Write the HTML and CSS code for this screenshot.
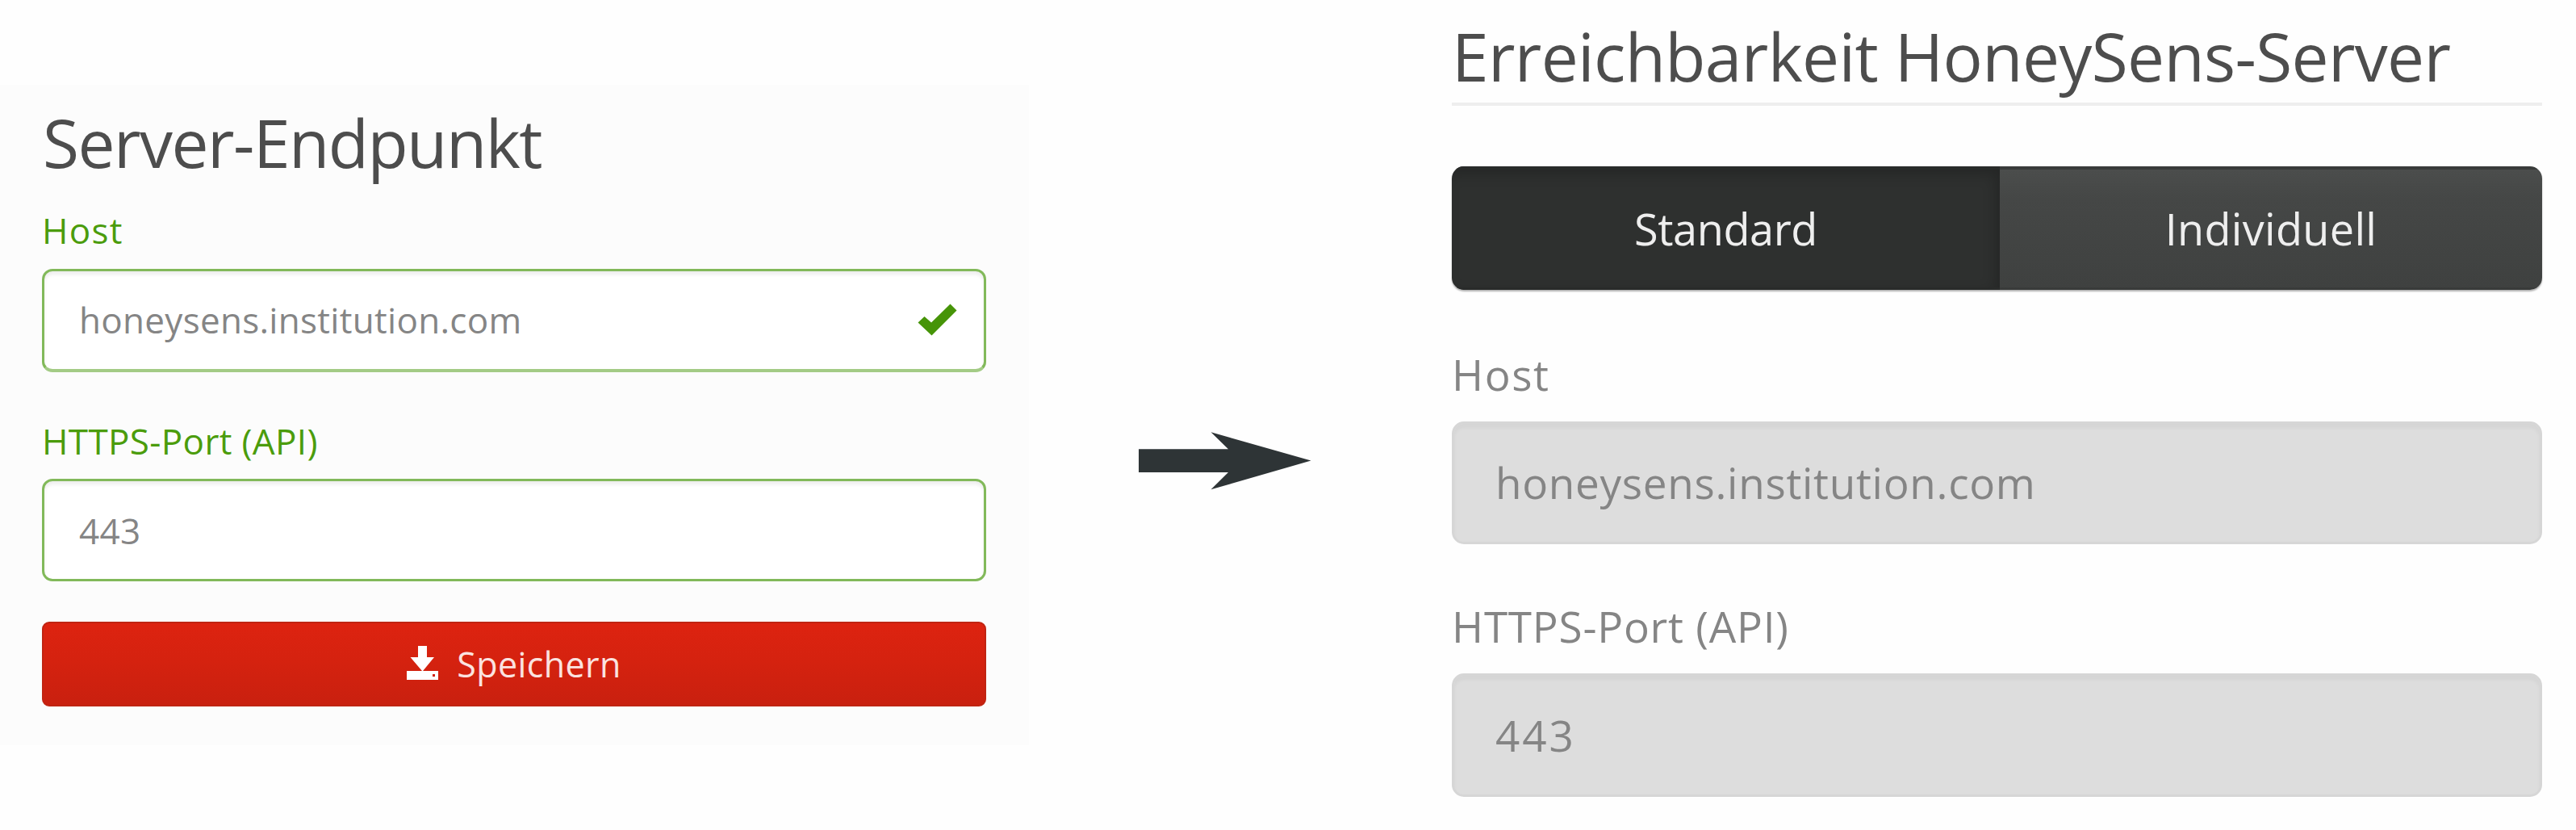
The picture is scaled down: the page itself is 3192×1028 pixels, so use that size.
FILE: index.html
```html
<!DOCTYPE html>
<html lang="de">
<head>
<meta charset="utf-8">
<title>HoneySens</title>
<link rel="stylesheet" href="styles.css">
</head>
<body>
<main class="page">
  <section class="endpoint">
    <h1 class="title endpoint-title">Server-Endpunkt</h1>
    <div class="label label-host">Host</div>
    <div class="input input-host"><span>honeysens.institution.com</span>
      <svg class="check" viewBox="0 0 49 40"><path d="M0.5 23.5 8.5 16 17 23.5 40.5 0.5 48.5 8.5 17.5 39.5Z"/></svg>
    </div>
    <div class="label label-port">HTTPS-Port (API)</div>
    <div class="input input-port"><span>443</span></div>
    <div class="save">
      <svg class="save-icon" viewBox="0 0 39 42"><path fill-rule="evenodd" d="M14 0H25V14H34L20 31H39V42H0V31H19L4.500 14H14ZM32 35V38H35V35Z"/></svg>
      <span>Speichern</span>
    </div>
  </section>
  <svg class="arrow" viewBox="0 0 214 72"><path d="M0 21.300H111L89.500 0.300 213.500 35.500 89.500 71.300 111 50H0Z"/></svg>
  <section class="reach">
    <h1 class="title reach-title">Erreichbarkeit HoneySens-Server</h1>
    <div class="group">
      <div class="option active"><span>Standard</span></div>
      <div class="option"><span class="wide">Individuell</span></div>
    </div>
    <div class="r-label r-host">Host</div>
    <div class="disabled d-host">honeysens.institution.com</div>
    <div class="r-label r-port">HTTPS-Port (API)</div>
    <div class="disabled d-port">443</div>
  </section>
</main>
</body>
</html>
```
FILE: styles.css
```css
* { box-sizing: border-box; }
body {
  margin: 0;
  background: #fefefe;
  font-family: "Open Sans", "Noto Sans", sans-serif;
}
.page { display: flex; align-items: flex-start; width: 3192px; height: 1028px; overflow: hidden; }
.title { margin: 0; font-size: 82px; font-weight: 400; color: #4d4d4d; white-space: nowrap; }

.endpoint {
  flex: none;
  width: 1275px;
  height: 818px;
  margin-top: 105px;
  padding: 26px 53px 0 52px;
  background: #fcfcfc;
}
.endpoint-title { padding-left: 1px; line-height: 90px; letter-spacing: -1.5px; }
.label { font-size: 44px; line-height: 60px; color: #4b9c0c; white-space: nowrap; }
.label-host { margin-top: 34px; letter-spacing: 1.3px; }
.label-port { margin-top: 55px; letter-spacing: 0.35px; }
.input {
  display: flex;
  align-items: center;
  justify-content: space-between;
  padding: 0 33px 0 43px;
  border: 3px solid #82b95a;
  border-radius: 13px;
  background: #fff;
  box-shadow: inset 0 4px 4px rgba(0, 0, 0, 0.07);
  font-size: 44px;
  line-height: 60px;
  letter-spacing: 0.3px;
  color: #858585;
}
.input-host { height: 128px; margin-top: 18px; padding-bottom: 2px; border-bottom: 4px solid #a3cb85; }
.input-port { height: 127px; margin-top: 17px; }
.check { width: 49px; height: 40px; fill: #469408; }
.save {
  display: flex;
  align-items: center;
  justify-content: center;
  gap: 23px;
  height: 105px;
  margin-top: 50px;
  border: 2px solid #c02412;
  border-radius: 9px;
  background: linear-gradient(#dd2310, #d5220f 45%, #c9200f);
  font-size: 43px;
  line-height: 60px;
  letter-spacing: 0.4px;
  color: #fbe3e0;
}
.save-icon { width: 39px; height: 42px; margin-bottom: 4px; fill: #fff; }

.arrow { flex: none; width: 214px; height: 72px; margin: 535px 174px 0 136px; fill: #2e3436; }

.reach { flex: none; width: 1351px; padding-top: 19px; }
.reach-title {
  height: 112px;
  line-height: 100px;
  letter-spacing: -0.65px;
  border-bottom: 4px solid #eeeeee;
}
.group {
  display: flex;
  height: 153px;
  margin-top: 75px;
  border-radius: 15px;
  overflow: hidden;
  box-shadow: 0 2px 2px rgba(0, 0, 0, 0.3);
}
.option {
  flex: 1;
  display: flex;
  align-items: center;
  justify-content: center;
  padding-bottom: 1px;
  border-top: 4px solid #393b3a;
  border-bottom: 3px solid #393b3a;
  background: linear-gradient(#4b4d4c, #454746 25%, #3f4140);
  font-size: 54px;
  line-height: 70px;
  letter-spacing: -0.4px;
  color: #eeeeee;
}
.option.active {
  flex: 0 0 679px;
  border-color: #292b2a;
  background: #2e302f;
  box-shadow: inset -6px 6px 16px rgba(0, 0, 0, 0.2);
}
.wide { letter-spacing: 0.3px; }
.r-label { font-size: 53px; line-height: 72px; color: #858585; white-space: nowrap; }
.r-host { margin-top: 69px; letter-spacing: 1.6px; }
.r-port { margin-top: 66px; letter-spacing: 0.8px; }
.disabled {
  padding-left: 51px;
  border: 3px solid #d6d6d6;
  border-radius: 15px;
  background: #dddddd;
  box-shadow: inset 0 5px 4px rgba(0, 0, 0, 0.04);
  font-size: 53px;
  color: #858585;
}
.d-host { height: 152px; margin-top: 22px; line-height: 146px; letter-spacing: 0.72px; }
.d-port { height: 153px; margin-top: 22px; line-height: 147px; letter-spacing: 3px; }
```
